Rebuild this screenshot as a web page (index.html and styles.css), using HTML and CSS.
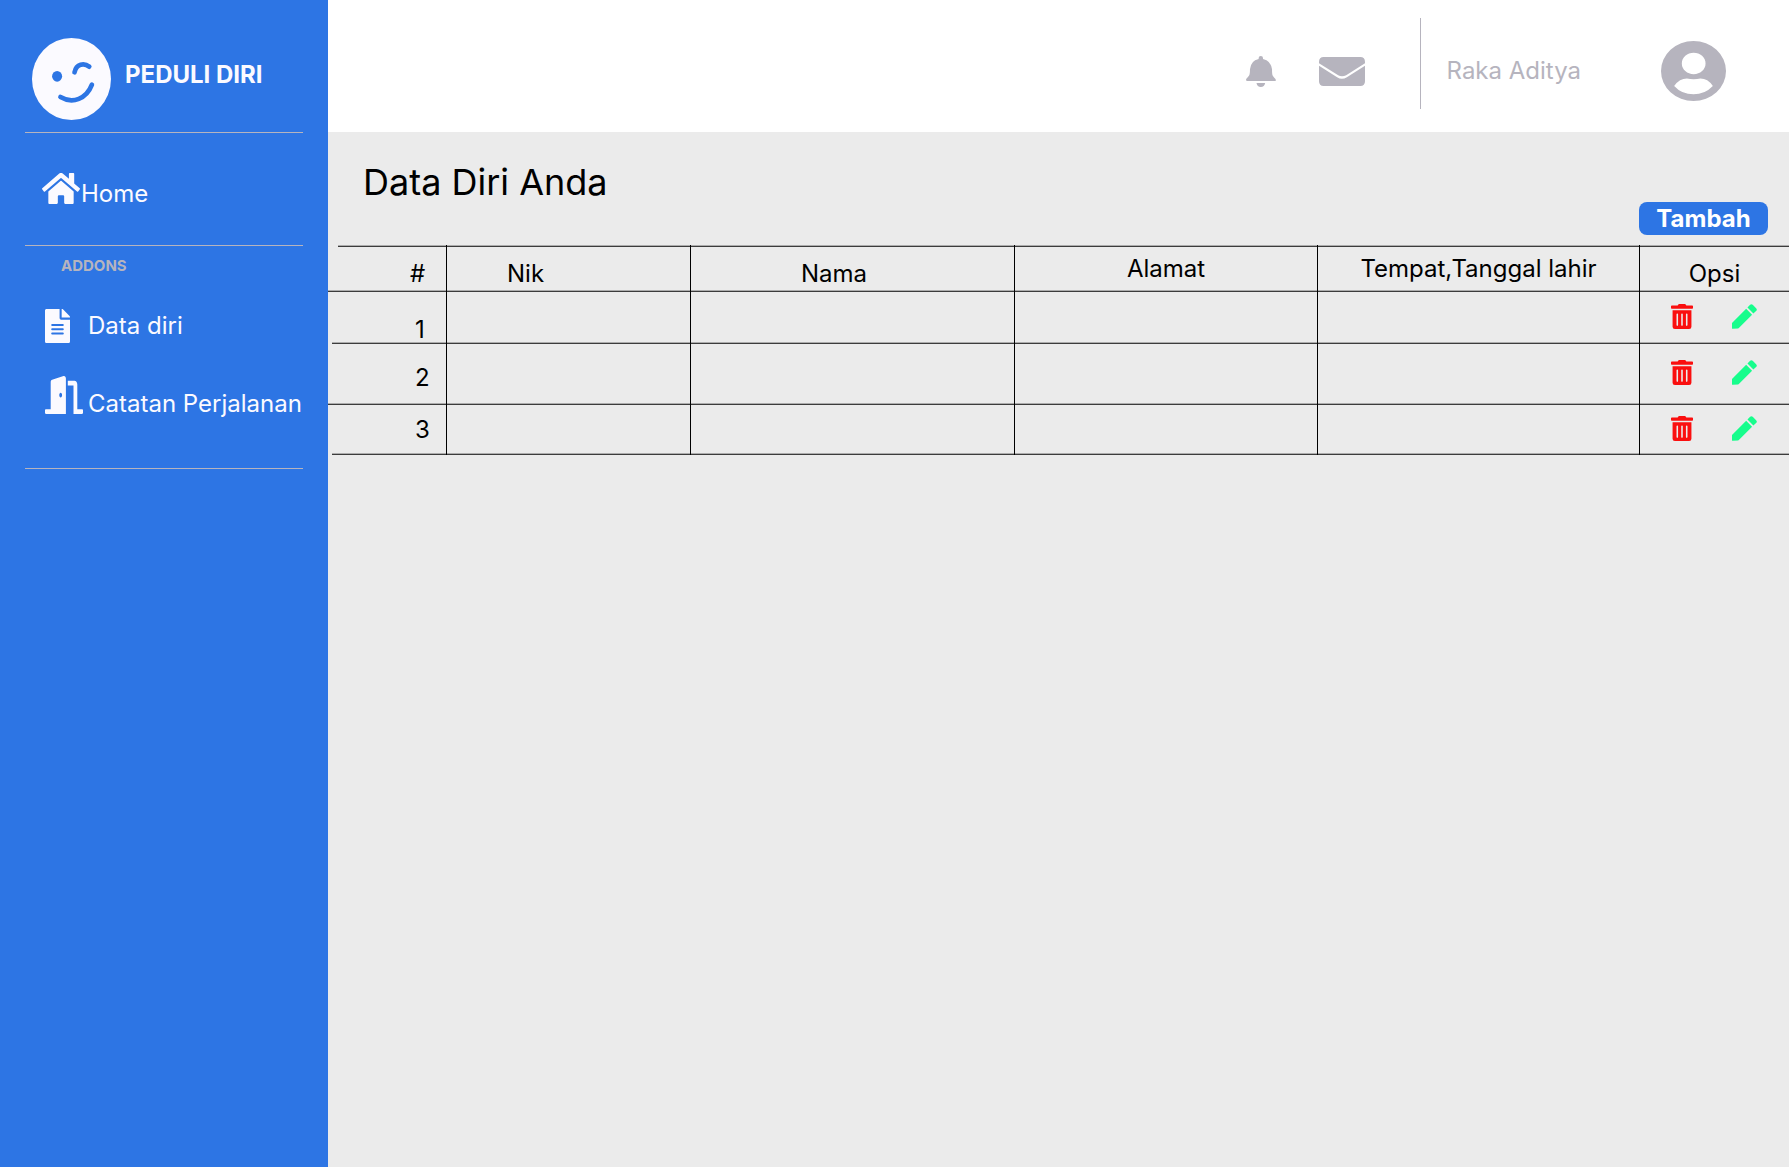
FILE: index.html
```html
<!DOCTYPE html>
<html lang="id">
<head>
<meta charset="utf-8">
<meta name="viewport" content="width=device-width, initial-scale=1">
<title>Peduli Diri</title>
<link rel="stylesheet" href="styles.css">
</head>
<body>
<svg class="sprite" aria-hidden="true">
  <symbol id="trash" viewBox="0 0 448 512" preserveAspectRatio="none"><path d="M32 464a48 48 0 0 0 48 48h288a48 48 0 0 0 48-48V128H32zm272-256a16 16 0 0 1 32 0v224a16 16 0 0 1-32 0zm-96 0a16 16 0 0 1 32 0v224a16 16 0 0 1-32 0zm-96 0a16 16 0 0 1 32 0v224a16 16 0 0 1-32 0zM432 32H312l-9.400-18.700A24 24 0 0 0 281.100 0H166.800a23.720 23.720 0 0 0-21.400 13.300L136 32H16A16 16 0 0 0 0 48v32a16 16 0 0 0 16 16h416a16 16 0 0 0 16-16V48a16 16 0 0 0-16-16z"/></symbol>
  <symbol id="pencil" viewBox="0 0 76 75"><path d="M0 57 43 14 61 32 20 73 18 74 2 75Q0 75 0 73ZM47 10 55 2Q59-1 63 2L74 13Q77 17 74 20L65 28Z"/></symbol>
</svg>
<div class="app">
  <aside class="sidebar">
    <div class="brand">
      <svg class="brand-logo" viewBox="96 113 236 246" preserveAspectRatio="none" aria-hidden="true">
        <ellipse cx="214" cy="236" rx="118" ry="123" fill="#fbfaff"/>
        <ellipse cx="171" cy="228" rx="15" ry="16" fill="#2d75e4"/>
        <path d="M223 216C228 190 252 187 267 199M181 290C218 312 259 295 275 253" fill="none" stroke="#2d75e4" stroke-width="14" stroke-linecap="round"/>
      </svg>
      <span class="brand-name">PEDULI DIRI</span>
    </div>
    <hr class="rule">
    <nav>
      <a class="nav-link nav-home" href="#">
        <svg width="38" height="31" viewBox="0 32 576 448" preserveAspectRatio="none" aria-hidden="true"><path d="M280.370 148.260L96 300.110V464a16 16 0 0 0 16 16l112.060-.29a16 16 0 0 0 15.920-16V368a16 16 0 0 1 16-16h64a16 16 0 0 1 16 16v95.640a16 16 0 0 0 16 16.050L464 480a16 16 0 0 0 16-16V300L295.670 148.260a12.190 12.190 0 0 0-15.300 0zM571.600 251.470L488 182.560V44.050a12 12 0 0 0-12-12h-56a12 12 0 0 0-12 12v72.610L318.470 43a48 48 0 0 0-61 0L4.340 251.470a12 12 0 0 0-1.600 16.900l25.500 31A12 12 0 0 0 45.150 301l235.220-193.740a12.190 12.190 0 0 1 15.300 0L530.900 301a12 12 0 0 0 16.900-1.600l25.500-31a12 12 0 0 0-1.700-16.930z"/></svg>
        <span>Home</span>
      </a>
      <hr class="rule">
      <h2 class="nav-heading">ADDONS</h2>
      <a class="nav-link nav-data" href="#">
        <svg width="25" height="34" viewBox="0 0 384 512" preserveAspectRatio="none" aria-hidden="true"><path d="M224 136V0H24C10.700 0 0 10.700 0 24v464c0 13.300 10.700 24 24 24h336c13.300 0 24-10.700 24-24V160H248c-13.200 0-24-10.800-24-24zm64 236c0 6.600-5.400 12-12 12H108c-6.600 0-12-5.400-12-12v-8c0-6.600 5.400-12 12-12h168c6.600 0 12 5.400 12 12v8zm0-64c0 6.600-5.400 12-12 12H108c-6.600 0-12-5.400-12-12v-8c0-6.600 5.400-12 12-12h168c6.600 0 12 5.400 12 12v8zm0-72v8c0 6.600-5.400 12-12 12H108c-6.600 0-12-5.400-12-12v-8c0-6.600 5.400-12 12-12h168c6.600 0 12 5.400 12 12zm96-114.100v6.100H256V0h6.100c6.400 0 12.500 2.500 17 7l97.900 98c4.500 4.500 7 10.600 7 16.900z"/></svg>
        <span>Data diri</span>
      </a>
      <a class="nav-link nav-trip" href="#">
        <svg width="38" height="38" viewBox="0 0 640 512" preserveAspectRatio="none" aria-hidden="true"><path d="M624 448h-80V113.450C544 86.190 522.470 64 496 64H384v64h96v384h144c8.840 0 16-7.160 16-16v-32c0-8.840-7.160-16-16-16zM312.240 1.010l-192 49.740C105.990 54.440 96 67.700 96 82.920V448H16c-8.840 0-16 7.160-16 16v32c0 8.840 7.160 16 16 16h336V33.180c0-21.580-19.560-37.410-39.760-32.170zM264 288c-13.250 0-24-14.330-24-32s10.750-32 24-32 24 14.330 24 32-10.750 32-24 32z"/></svg>
        <span>Catatan Perjalanan</span>
      </a>
      <hr class="rule">
    </nav>
  </aside>
  <div class="page">
    <header class="topbar">
      <button class="icon-button bell" type="button" aria-label="Notifikasi">
        <svg width="30" height="31" viewBox="66 168 83 93" preserveAspectRatio="none"><path d="M101 177V174Q101 168 107 168 113 168 113 174V177Q135 182 138 208C138 226 139 228 147 236Q151 243 145 243H70Q64 243 67 236C75 228 77 226 77 208Q79 182 101 177ZM95 249H119Q117 261 107 261 97 261 95 249Z"/></svg>
      </button>
      <button class="icon-button mail" type="button" aria-label="Pesan">
        <svg width="46" height="29" viewBox="267 168 127 87" preserveAspectRatio="none"><path d="M267 183Q267 168 280 168H381Q394 168 394 183V187L342 223Q330 229 320 223L267 187ZM267 194 317 229Q330 238 344 229L394 194V241Q394 255 381 255H280Q267 255 267 241Z"/></svg>
      </button>
      <div class="user">
        <span>Raka Aditya</span>
        <svg width="65" height="60" viewBox="1215 129 178 179" preserveAspectRatio="none" role="img" aria-label="Profil"><path fill-rule="evenodd" d="M1215 218.500A89 89.500 0 1 0 1393 218.500A89 89.500 0 1 0 1215 218.500ZM1272 196A32.500 32 0 1 1 1337 196A32.500 32 0 1 1 1272 196ZM1251 263Q1266 241 1286 241C1298 244 1311 244 1323 241Q1343 241 1357 263Q1335 288 1304 288 1272 288 1251 263Z"/></svg>
      </div>
    </header>
    <main>
      <div class="title-row">
        <h1>Data Diri Anda</h1>
        <button class="add-button" type="button">Tambah</button>
      </div>
      <table class="data-table">
        <colgroup><col class="col-no"><col class="col-nik"><col class="col-nama"><col class="col-alamat"><col class="col-lahir"><col class="col-opsi"></colgroup>
        <thead>
          <tr><th class="low">#</th><th class="low">Nik</th><th class="low">Nama</th><th>Alamat</th><th>Tempat,Tanggal lahir</th><th class="low">Opsi</th></tr>
        </thead>
        <tbody>
          <tr class="row-first"><td>1</td><td></td><td></td><td></td><td></td><td><div class="actions"><button type="button" aria-label="Hapus"><svg class="trash"><use href="#trash"/></svg></button><button type="button" aria-label="Ubah"><svg class="pencil"><use href="#pencil"/></svg></button></div></td></tr>
          <tr class="row-second"><td>2</td><td></td><td></td><td></td><td></td><td><div class="actions"><button type="button" aria-label="Hapus"><svg class="trash"><use href="#trash"/></svg></button><button type="button" aria-label="Ubah"><svg class="pencil"><use href="#pencil"/></svg></button></div></td></tr>
          <tr class="row-third"><td>3</td><td></td><td></td><td></td><td></td><td><div class="actions"><button type="button" aria-label="Hapus"><svg class="trash"><use href="#trash"/></svg></button><button type="button" aria-label="Ubah"><svg class="pencil"><use href="#pencil"/></svg></button></div></td></tr>
        </tbody>
      </table>
    </main>
  </div>
</div>
</body>
</html>
```

FILE: styles.css
```css
* { box-sizing: border-box; }
body {
  margin: 0;
  font-family: Inter, "Liberation Sans", sans-serif;
  font-size: 24px;
  line-height: 24px;
  color: #000;
}
svg { display: block; flex: none; fill: currentColor; }
button { border: 0; padding: 0; background: none; font: inherit; color: inherit; cursor: pointer; }
.sprite { position: absolute; width: 0; height: 0; }

.app { display: flex; min-height: 100vh; }

/* Sidebar */
.sidebar { flex: 0 0 328px; background: #2d75e4; color: #fbfaff; }
.brand { display: flex; align-items: center; gap: 14px; padding: 38px 0 12px 32px; }
.brand-logo { width: 79px; height: 82px; }
.brand-name { font-weight: 700; padding-bottom: 8px; }
.rule { height: 1px; margin: 0 25px; border: 0; background: #b6b4be; }
.nav-link { display: flex; color: inherit; text-decoration: none; white-space: nowrap; }
.nav-home, .nav-trip { align-items: flex-end; }
.nav-home svg, .nav-trip svg { margin-bottom: 2px; }
.nav-home { padding: 40px 0 39px 42px; gap: 1px; }
.nav-heading { margin: 0; padding: 8px 0 0 61px; font-size: 15px; font-weight: 700; color: #b6b4be; }
.nav-data { align-items: center; padding: 31px 0 0 45px; gap: 18px; }
.nav-trip { padding: 33px 0 52px 45px; gap: 5px; }

/* Top bar */
.page { flex: 1; min-width: 0; display: flex; flex-direction: column; background: #ebebeb; }
.topbar {
  display: flex;
  justify-content: flex-end;
  height: 132px;
  padding: 18px 63px 23px 0;
  background: #fff;
  color: #b6b4be;
}
.icon-button { display: flex; align-items: center; padding-top: 15px; }
.bell { margin-right: 43px; }
.mail { margin-right: 55px; }
.user {
  display: flex;
  align-items: center;
  gap: 80px;
  padding: 14px 0 0 26px;
  border-left: 1px solid #b6b4be;
}

/* Content */
.title-row { display: flex; justify-content: space-between; padding: 28px 21px 10px 35px; }
h1 { margin: 0; font-size: 36px; line-height: 44px; font-weight: 400; }
.add-button {
  align-self: flex-end;
  width: 129px;
  height: 33px;
  margin-top: 42px;
  border-radius: 8px;
  background: #2d75e4;
  color: #fff;
  font-weight: 700;
}

/* Column widths scale together with the table */
.data-table { width: 100%; table-layout: fixed; border-spacing: 0; }
.col-no { width: 118px; }
.col-nik { width: 244px; }
.col-nama { width: 324px; }
.col-alamat { width: 303px; }
.col-lahir { width: 322px; }
.col-opsi { width: 150px; }
th, td { padding: 0; font-weight: 400; }
th + th, td + td { border-left: 1px solid #000; }
thead tr {
  height: 47px;
  background:
    linear-gradient(#acacac 1px, #3c3c3c 1px) right top / calc(100% - 10px) 2px no-repeat,
    linear-gradient(#acacac 1px, #3c3c3c 1px) right bottom / 100% 2px no-repeat;
}
tbody tr { background: linear-gradient(#acacac 1px, #3c3c3c 1px) right bottom / 100% 2px no-repeat; }
tbody .row-first, tbody .row-third { background-size: calc(100% - 4px) 2px; }
.row-first { height: 52px; }
.row-second { height: 61px; }
.row-third { height: 50px; }
.low { padding-top: 11px; }
th:first-child { padding-left: 82px; text-align: left; }
th:nth-child(2) { padding-left: 60px; text-align: left; }
th:nth-child(3) { padding-left: 110px; text-align: left; }
td:first-child { padding-left: 87px; }
.row-first td:first-child { padding-top: 24px; }
.row-second td:first-child { padding-top: 6px; }
.actions { display: flex; justify-content: center; gap: 39px; padding: 0 2px 4px 0; }
.trash { width: 22px; height: 25px; color: #fa0f0f; }
.pencil { width: 25px; height: 25px; color: #17fd8c; }
```
